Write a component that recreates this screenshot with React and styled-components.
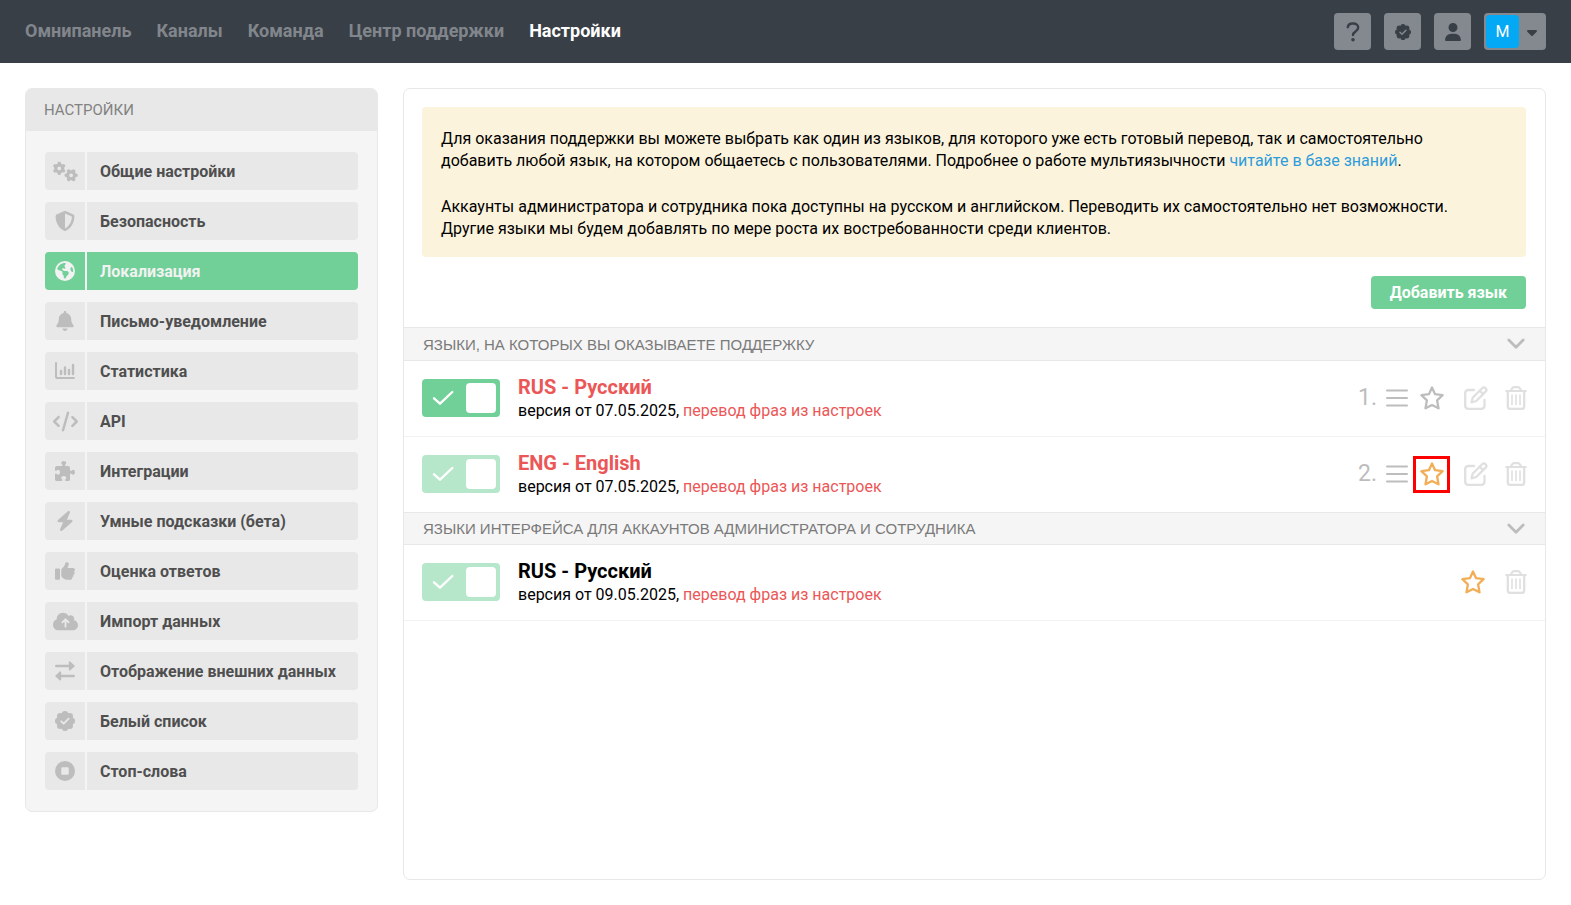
import * as React from "react";
import styled, { createGlobalStyle } from "styled-components";
import {
  FaBell,
  FaBolt,
  FaCaretDown,
  FaCircleStop,
  FaCloudArrowUp,
  FaCode,
  FaEarthAmericas,
  FaGears,
  FaPuzzlePiece,
  FaShieldHalved,
  FaThumbsUp,
  FaUser,
} from "react-icons/fa6";

const BadgeIcon = ({ size = 20, tick = "#e8e8e8" }) => (
  <svg width={size} height={size} viewBox="0 0 20 20" aria-hidden="true">
    <g fill="currentColor">
      <circle cx="10" cy="10" r="8" />
      <circle cx="10" cy="3.2" r="3.2" />
      <circle cx="14.8" cy="5.2" r="3.2" />
      <circle cx="16.8" cy="10" r="3.2" />
      <circle cx="14.8" cy="14.8" r="3.2" />
      <circle cx="10" cy="16.8" r="3.2" />
      <circle cx="5.2" cy="14.8" r="3.2" />
      <circle cx="3.2" cy="10" r="3.2" />
      <circle cx="5.2" cy="5.2" r="3.2" />
    </g>
    <path
      d="M6.2 10.3l2.5 2.4 5-5"
      fill="none"
      stroke={tick}
      strokeWidth="1.8"
      strokeLinecap="round"
      strokeLinejoin="round"
    />
  </svg>
);

const ChartIcon = () => (
  <svg width="20" height="18" viewBox="0 0 20 18" aria-hidden="true">
    <g fill="none" stroke="currentColor" strokeLinecap="round">
      <path d="M1 1v13.5c0 1 .7 1.6 1.6 1.6H19" strokeWidth="2" />
      <path d="M6 9v3M10 5.5V12M14 8v4M18 3v9" strokeWidth="2.4" />
    </g>
  </svg>
);

const ExchangeIcon = () => (
  <svg width="20" height="20" viewBox="0 0 20 20" aria-hidden="true">
    <g stroke="currentColor" strokeLinecap="round" strokeLinejoin="round">
      <path d="M1.3 5H15M5 15h13.7" fill="none" strokeWidth="2.6" />
      <path d="M14.6 1.2v7.6L19 5zM5.4 11.2v7.6L1 15z" fill="currentColor" strokeWidth="1.6" />
    </g>
  </svg>
);

const QuestionIcon = () => (
  <svg width="14" height="20" viewBox="0 0 14 20" aria-hidden="true">
    <path
      d="M1.8 5.2C2 2.9 3.8 1.5 6.6 1.5h.8c2.7 0 4.8 1.6 4.8 4 0 1.9-1 3-2.7 4.1C7.8 10.7 7 11.2 7 13"
      fill="none"
      stroke="currentColor"
      strokeWidth="2.4"
      strokeLinecap="round"
    />
    <circle cx="7" cy="17.8" r="1.8" fill="currentColor" />
  </svg>
);

const ChevronIcon = () => (
  <svg width="18" height="12" viewBox="0 0 18 12" aria-hidden="true">
    <path
      d="M1.8 2L9 9.2 16.2 2"
      fill="none"
      stroke="currentColor"
      strokeWidth="2.8"
      strokeLinecap="round"
      strokeLinejoin="round"
    />
  </svg>
);

const BarsIcon = () => (
  <svg width="22" height="18" viewBox="0 0 22 18" aria-hidden="true">
    <path
      d="M1 1.5h20M1 9h20M1 16.5h20"
      fill="none"
      stroke="currentColor"
      strokeWidth="2"
      strokeLinecap="round"
    />
  </svg>
);

const StarIcon = () => (
  <svg width="24" height="24" viewBox="0 0 24 24" aria-hidden="true">
    <path
      d="M12 1.5l3.1 6.7 7.5 1-5.5 5.1 1.4 8L12 18.9l-6.5 3.4 1.4-8-5.5-5.1 7.5-1z"
      fill="none"
      stroke="currentColor"
      strokeWidth="2.3"
      strokeLinejoin="round"
    />
  </svg>
);

const EditIcon = () => (
  <svg width="24" height="24" viewBox="0 0 24 24" aria-hidden="true">
    <g fill="none" stroke="currentColor" strokeWidth="2.3" strokeLinecap="round" strokeLinejoin="round">
      <path d="M10 4H4.2C2.3 4 1.2 5.2 1.2 7v12.5c0 2 1.2 3.3 3.1 3.3h13c2 0 3.2-1.3 3.2-3.3V14" />
      <path d="M18.2 2.2c1-1 2.4-1 3.4 0s1 2.4 0 3.4L12.3 15l-4.8 1.3 1.3-4.8z" />
      <path d="M15.8 4.8l3.3 3.3" />
    </g>
  </svg>
);

const TrashIcon = () => (
  <svg width="22" height="24" viewBox="0 0 22 24" aria-hidden="true">
    <g fill="none" stroke="currentColor" strokeLinecap="round" strokeLinejoin="round">
      <path
        d="M1.2 5h19.6M5.8 4.5l1.5-2.3c.4-.7.8-1 1.6-1h4.2c.8 0 1.2.3 1.6 1l1.5 2.3"
        strokeWidth="2.2"
      />
      <path
        d="M2.8 5.5v14.7c0 1.7 1 2.7 2.6 2.7h11.2c1.6 0 2.6-1 2.6-2.7V5.5"
        strokeWidth="2.3"
      />
      <path d="M7 9v9.5M11 9v9.5M15 9v9.5" strokeWidth="1.6" />
    </g>
  </svg>
);

const CheckIcon = () => (
  <svg width="22" height="16" viewBox="0 0 22 16" aria-hidden="true">
    <path
      d="M2 8.3l6 5.4L20.3 2"
      fill="none"
      stroke="currentColor"
      strokeWidth="2.4"
      strokeLinecap="round"
      strokeLinejoin="round"
    />
  </svg>
);

const navItems = ["Омнипанель", "Каналы", "Команда", "Центр поддержки", "Настройки"];

const menuItems = [
  { label: "Общие настройки", icon: <FaGears size={25} /> },
  { label: "Безопасность", icon: <FaShieldHalved size={20} /> },
  { label: "Локализация", icon: <FaEarthAmericas size={20} /> },
  { label: "Письмо-уведомление", icon: <FaBell size={20} /> },
  { label: "Статистика", icon: <ChartIcon /> },
  { label: "API", icon: <FaCode size={25} /> },
  { label: "Интеграции", icon: <FaPuzzlePiece size={20} /> },
  { label: "Умные подсказки (бета)", icon: <FaBolt size={20} /> },
  { label: "Оценка ответов", icon: <FaThumbsUp size={20} /> },
  { label: "Импорт данных", icon: <FaCloudArrowUp size={25} /> },
  { label: "Отображение внешних данных", icon: <ExchangeIcon /> },
  { label: "Белый список", icon: <BadgeIcon /> },
  { label: "Стоп-слова", icon: <FaCircleStop size={20} /> },
];

const supportLanguages = [
  { id: "rus", name: "RUS - Русский", date: "07.05.2025", position: 1 },
  { id: "eng", name: "ENG - English", date: "07.05.2025", position: 2, locked: true, starred: true, marked: true },
];

const interfaceLanguages = [
  { id: "ui-rus", name: "RUS - Русский", date: "09.05.2025", locked: true, starred: true, plain: true },
];

const LanguageRow = ({ language }) => {
  const [enabled, setEnabled] = React.useState(true);

  return (
    <Row>
      <Toggle $locked={language.locked}>
        <ToggleInput
          type="checkbox"
          aria-label={language.name}
          checked={enabled}
          disabled={language.locked}
          onChange={(e) => setEnabled(e.target.checked)}
        />
        <CheckIcon />
        <Knob />
      </Toggle>
      <LanguageInfo>
        <LanguageName href="#" $plain={language.plain}>
          {language.name}
        </LanguageName>
        <LanguageVersion>
          версия от {language.date}, <PhrasesLink href="#">перевод фраз из настроек</PhrasesLink>
        </LanguageVersion>
      </LanguageInfo>
      <Actions>
        {language.position && (
          <SortGroup>
            <Position>{language.position}.</Position>
            <IconButton aria-label="Переместить">
              <BarsIcon />
            </IconButton>
          </SortGroup>
        )}
        <StarButton aria-label="По умолчанию" $starred={language.starred} $marked={language.marked}>
          <StarIcon />
        </StarButton>
        {language.position && (
          <IconButton aria-label="Редактировать" $faint>
            <EditIcon />
          </IconButton>
        )}
        <IconButton aria-label="Удалить" $faint>
          <TrashIcon />
        </IconButton>
      </Actions>
    </Row>
  );
};

const LanguageSection = ({ title, languages }) => {
  const [open, setOpen] = React.useState(true);

  return (
    <section>
      <SectionHeader>
        <SectionTitle>{title}</SectionTitle>
        <IconButton aria-label="Свернуть" aria-expanded={open} onClick={() => setOpen(!open)}>
          <ChevronIcon />
        </IconButton>
      </SectionHeader>
      {open && languages.map((language) => <LanguageRow key={language.id} language={language} />)}
    </section>
  );
};

const App = () => {
  return (
    <Page>
      <GlobalStyle />
      <TopBar>
        <Nav>
          {navItems.map((item) => (
            <NavLink key={item} href="#" $active={item === "Настройки"}>
              {item}
            </NavLink>
          ))}
        </Nav>
        <TopActions>
          <TopButton aria-label="Помощь">
            <QuestionIcon />
          </TopButton>
          <TopButton aria-label="Статус">
            <BadgeIcon size={16} tick="#84898f" />
          </TopButton>
          <TopButton aria-label="Пользователи">
            <FaUser size={18} />
          </TopButton>
          <ProfileButton>
            <Avatar>M</Avatar>
            <FaCaretDown size={16} />
          </ProfileButton>
        </TopActions>
      </TopBar>
      <Content>
        <Sidebar>
          <SidebarTitle>НАСТРОЙКИ</SidebarTitle>
          <Menu>
            {menuItems.map((item) => (
              <MenuLink key={item.label} href="#" $active={item.label === "Локализация"}>
                <MenuIcon>{item.icon}</MenuIcon>
                <MenuLabel>{item.label}</MenuLabel>
              </MenuLink>
            ))}
          </Menu>
        </Sidebar>
        <Panel>
          <Intro>
            <Notice>
              <p>
                Для оказания поддержки вы можете выбрать как один из языков, для которого уже есть готовый
                перевод, так и самостоятельно
                <br />
                добавить любой язык, на котором общаетесь с пользователями. Подробнее о работе
                мультиязычности <NoticeLink href="#">читайте в базе знаний</NoticeLink>.
              </p>
              <p>
                Аккаунты администратора и сотрудника пока доступны на русском и английском. Переводить их
                самостоятельно нет возможности.
                <br />
                Другие языки мы будем добавлять по мере роста их востребованности среди клиентов.
              </p>
            </Notice>
            <AddButton>Добавить язык</AddButton>
          </Intro>
          <LanguageSection title="ЯЗЫКИ, НА КОТОРЫХ ВЫ ОКАЗЫВАЕТЕ ПОДДЕРЖКУ" languages={supportLanguages} />
          <LanguageSection
            title="ЯЗЫКИ ИНТЕРФЕЙСА ДЛЯ АККАУНТОВ АДМИНИСТРАТОРА И СОТРУДНИКА"
            languages={interfaceLanguages}
          />
        </Panel>
      </Content>
    </Page>
  );
};

const GlobalStyle = createGlobalStyle`
  * {
    box-sizing: border-box;
  }
  body {
    margin: 0;
    background: #fff;
    color: #000;
    font-family: Roboto, "Liberation Sans", sans-serif;
    font-size: 16px;
  }
  a {
    text-decoration: none;
  }
  p {
    margin: 0;
  }
  button {
    padding: 0;
    border: none;
    background: none;
    font-family: inherit;
    cursor: pointer;
  }
  svg {
    display: block;
    flex-shrink: 0;
  }
`;

const Page = styled.div`
  display: flex;
  flex-direction: column;
  min-height: 100vh;
`;

const TopBar = styled.header`
  display: flex;
  align-items: center;
  justify-content: space-between;
  height: 63px;
  padding: 0 25px;
  background: #393f47;
`;

const Nav = styled.nav`
  display: flex;
  gap: 25px;
  padding-bottom: 2px;
`;

const NavLink = styled.a`
  color: ${(props) => (props.$active ? "#fff" : "#81868c")};
  font-size: 18px;
  font-weight: 700;
  line-height: 22px;
`;

const TopActions = styled.div`
  display: flex;
  gap: 13px;
`;

const TopButton = styled.button`
  display: flex;
  align-items: center;
  justify-content: center;
  width: 37px;
  height: 37px;
  border-radius: 4px;
  background: #84898f;
  color: #393f47;
`;

const ProfileButton = styled(TopButton)`
  justify-content: flex-start;
  gap: 5px;
  width: 62px;
  padding: 2px;
`;

const Avatar = styled.span`
  width: 33px;
  height: 33px;
  border-radius: 4px;
  background: #03a9f4;
  color: #fff;
  font-size: 16px;
  line-height: 33px;
  text-align: center;
`;

const Content = styled.div`
  display: flex;
  flex: 1;
  align-items: flex-start;
  gap: 25px;
  padding: 25px;
`;

const Sidebar = styled.aside`
  flex: 0 0 353px;
  border: 1px solid #e8e8e8;
  border-radius: 7px;
  background: #f5f5f5;
  overflow: hidden;
`;

const SidebarTitle = styled.div`
  height: 42px;
  padding: 0 18px;
  background: #e8e8e8;
  color: #828282;
  font-size: 15px;
  line-height: 42px;
`;

const Menu = styled.nav`
  display: flex;
  flex-direction: column;
  gap: 12px;
  padding: 21px 19px;
`;

const MenuLink = styled.a`
  --cell: ${(props) => (props.$active ? "#71d097" : "#e8e8e8")};
  --icon: ${(props) => (props.$active ? "#f2f2f2" : "#bdbdbd")};
  --label: ${(props) => (props.$active ? "#f2f2f2" : "#4f4f4f")};
  display: flex;
  gap: 2px;
  height: 38px;
  border-radius: 4px;
  overflow: hidden;
`;

const MenuIcon = styled.span`
  display: flex;
  align-items: center;
  justify-content: center;
  width: 40px;
  background: var(--cell);
  color: var(--icon);
`;

const MenuLabel = styled.span`
  flex: 1;
  padding-left: 13px;
  background: var(--cell);
  color: var(--label);
  font-weight: 700;
  line-height: 40px;
`;

const Panel = styled.main`
  flex: 1;
  align-self: stretch;
  border: 1px solid #e8e8e8;
  border-radius: 7px;
`;

const Intro = styled.div`
  display: flex;
  flex-direction: column;
  align-items: flex-end;
  gap: 19px;
  padding: 18px 19px 18px 18px;
`;

const Notice = styled.div`
  display: flex;
  flex-direction: column;
  gap: 24px;
  width: 100%;
  padding: 21px 19px 17px;
  border-radius: 4px;
  background: #fcf3dc;
  line-height: 22px;
`;

const NoticeLink = styled.a`
  color: #2d9cdb;
`;

const AddButton = styled.button`
  height: 33px;
  padding: 0 19px;
  border-radius: 4px;
  background: #71d097;
  color: #fff;
  font-size: 16px;
  font-weight: 700;
`;

const SectionHeader = styled.div`
  display: flex;
  align-items: center;
  justify-content: space-between;
  height: 34px;
  padding: 0 20px 0 19px;
  border-top: 1px solid #e8e8e8;
  border-bottom: 1px solid #e8e8e8;
  background: #f5f5f5;

  section + section > & {
    height: 33px;
    margin-top: -1px;
  }
`;

const SectionTitle = styled.h2`
  margin: 0;
  color: #7a7a7a;
  font-family: "Liberation Sans", Arial, sans-serif;
  font-size: 15px;
  font-weight: 400;
`;

const Row = styled.div`
  display: flex;
  align-items: center;
  height: 76px;
  padding: 0 18px 1px;
  border-bottom: 1px solid #f2f2f2;
`;

const Toggle = styled.label`
  display: flex;
  align-items: center;
  justify-content: space-between;
  width: 78px;
  height: 38px;
  padding: 0 4px 0 10px;
  border-radius: 4px;
  background: #71d097;
  color: #fff;
  opacity: ${(props) => (props.$locked ? 0.5 : 1)};
`;

const ToggleInput = styled.input`
  position: absolute;
  width: 1px;
  height: 1px;
  margin: 0;
  opacity: 0;
`;

const Knob = styled.span`
  width: 30px;
  height: 30px;
  border-radius: 4px;
  background: #fff;
`;

const LanguageInfo = styled.div`
  display: flex;
  flex: 1;
  flex-direction: column;
  align-items: flex-start;
  padding-left: 18px;
`;

const LanguageName = styled.a`
  color: ${(props) => (props.$plain ? "#000" : "#eb5757")};
  font-size: 20px;
  font-weight: 700;
  line-height: 25px;
`;

const LanguageVersion = styled.div`
  line-height: 22px;
`;

const PhrasesLink = styled.a`
  color: #eb5757;
`;

const Actions = styled.div`
  display: flex;
  align-items: center;
  gap: 17px;
`;

const SortGroup = styled.div`
  display: flex;
  align-items: center;
  gap: 9px;
  margin-right: -9px;
`;

const Position = styled.span`
  color: #bdbdbd;
  font-size: 23px;
  line-height: 30px;
`;

const IconButton = styled.button`
  color: ${(props) => (props.$faint ? "#e0e0e0" : "#bdbdbd")};
`;

const StarButton = styled.button`
  display: flex;
  align-items: center;
  justify-content: center;
  width: 31px;
  height: 31px;
  color: ${(props) => (props.$starred ? "#f2ae57" : "#bdbdbd")};
  outline: ${(props) => (props.$marked ? "3px solid #f00" : "none")};
`;

export default App;
